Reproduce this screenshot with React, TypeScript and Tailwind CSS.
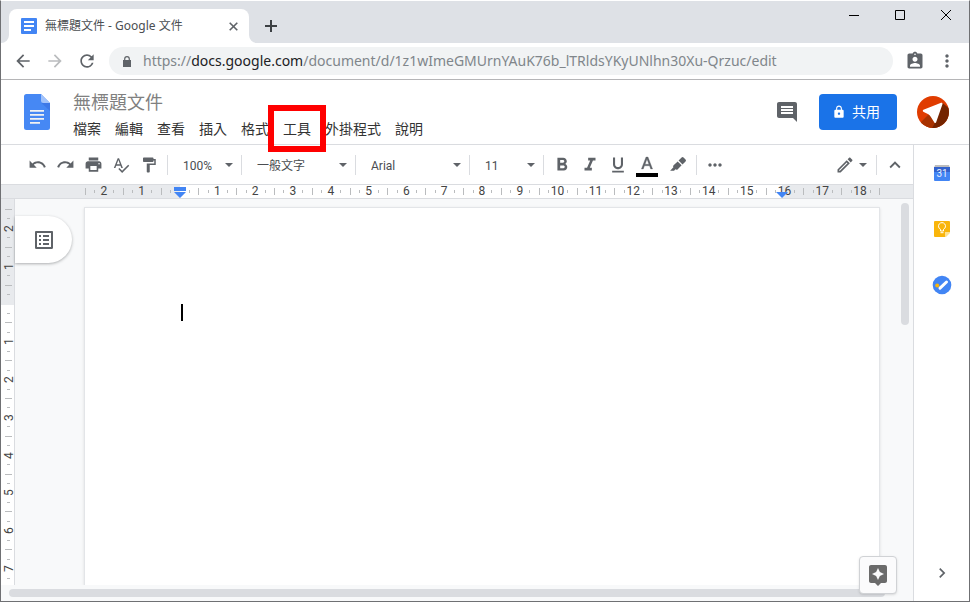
import React from "react";
import {
  MdArrowBack,
  MdArrowForward,
  MdAssignmentInd,
  MdAssistant,
  MdChevronRight,
  MdComment,
  MdExpandLess,
  MdFormatBold,
  MdFormatItalic,
  MdFormatPaint,
  MdFormatUnderlined,
  MdLock,
  MdMoreHoriz,
  MdMoreVert,
  MdOutlineEdit,
  MdOutlineListAlt,
  MdPrint,
  MdRedo,
  MdRefresh,
  MdSpellcheck,
  MdUndo,
} from "react-icons/md";

const MENUS = ["檔案", "編輯", "查看", "插入", "格式", "工具", "外掛程式", "說明"];
const HIGHLIGHTED_MENU = "工具";

// centimetres, counted from the page margin
const H_MARKS = Array.from({ length: 21 }, (_, i) => i - 2);
const V_MARKS = Array.from({ length: 10 }, (_, i) => i - 2);

function DocsFavicon() {
  return (
    <svg width="16" height="16" viewBox="0 0 16 16" aria-hidden="true">
      <rect width="16" height="16" rx="1" fill="#4285f4" />
      <path d="M3 3h10v2H3zM3 7h10v2H3zM3 11h7v2H3z" fill="#fff" />
    </svg>
  );
}

function DocsLogo() {
  return (
    <svg width="26" height="36" viewBox="0 0 26 36" aria-hidden="true">
      <path d="M2.500 0H17l9 9v24.500a2.500 2.500 0 0 1-2.500 2.500h-21A2.500 2.500 0 0 1 0 33.500v-31A2.500 2.500 0 0 1 2.500 0z" fill="#4688f4" />
      <path d="M17.500 9 26 17V9z" fill="#3367d6" opacity=".45" />
      <path d="M17 0l9 9h-6.500A2.500 2.500 0 0 1 17 6.500z" fill="#a1c2fa" />
      <path d="M6 16h14v1.800H6zM6 20h14v1.800H6zM6 24h14v1.800H6zM6 28h10v1.800H6z" fill="#f1f1f1" />
    </svg>
  );
}

function Avatar() {
  return (
    <svg width="32" height="32" viewBox="0 0 32 32" aria-hidden="true">
      <defs>
        <clipPath id="avatar-clip">
          <circle cx="16" cy="16" r="16" />
        </clipPath>
      </defs>
      <g clipPath="url(#avatar-clip)">
        <rect width="32" height="32" fill="#e03c00" />
        <path d="M12 18 0 30l4 4h14l1-9z" fill="#a83200" />
        <path d="M25.500 7 34 14v20H14l4.500-8z" fill="#742400" />
        <path d="M24.500 7.800 6.800 14.800l5 2.600c1.200.6 2 1.400 2.600 2.500l3.800 6z" fill="#fff" stroke="#fff" strokeWidth="2" strokeLinejoin="round" />
      </g>
    </svg>
  );
}

function HighlighterIcon() {
  return (
    <svg width="18" height="18" viewBox="0 0 16 16" fill="currentColor" aria-hidden="true">
      <path d="M11.200 1.300a1.200 1.200 0 0 1 1.700 0l1.800 1.800a1.200 1.200 0 0 1 0 1.700L12 7.500 8.500 4z" />
      <path d="M7.700 4.800l3.500 3.500-3.400 3.400c-.6.6-1.500.6-2.100.1L4.500 13H1l2.900-2.900c-.4-.6-.3-1.300.2-1.800z" />
    </svg>
  );
}

function CaretDown() {
  return (
    <svg width="8" height="4" viewBox="0 0 8 4" aria-hidden="true">
      <path d="M0 0h8L4 4z" fill="#5f6368" />
    </svg>
  );
}

/** Concave foot on each side of the active tab. */
function TabFoot({ flip = false }: { flip?: boolean }) {
  return (
    <svg width="8" height="8" viewBox="0 0 8 8" aria-hidden="true">
      <path d={flip ? "M0 0a8 8 0 0 0 8 8H0z" : "M8 0a8 8 0 0 1-8 8h8z"} fill="#fff" />
    </svg>
  );
}

function TabStrip() {
  return (
    <div className="flex h-[42px] shrink-0 items-end bg-[#dee1e6]">
      <TabFoot />
      <div className="flex h-[34px] w-60 items-center rounded-t-lg bg-white pr-[9px] pl-3">
        <DocsFavicon />
        <span className="ml-2 flex-1 font-['Noto_Sans','Noto_Sans_CJK_TC',sans-serif] text-xs whitespace-nowrap text-[#4b4e52]">
          無標題文件 - Google 文件
        </span>
        <button aria-label="關閉分頁" className="flex size-[14px] items-center justify-center">
          <svg width="9" height="9" viewBox="0 0 9 9" stroke="#5f6368" strokeWidth="1.6">
            <path d="M.7.7l7.600 7.600M8.300.7.7 8.300" />
          </svg>
        </button>
      </div>
      <TabFoot flip />
      <button aria-label="新分頁" className="flex h-[34px] w-7 items-center justify-center">
        <svg width="12" height="12" viewBox="0 0 12 12" fill="#3c4043">
          <path d="M5 0h2v5h5v2H7v5H5V7H0V5h5z" />
        </svg>
      </button>
      <div className="ml-auto flex self-start">
        <button aria-label="最小化" className="flex h-7 w-[46px] items-center justify-center">
          <svg width="10" height="10" viewBox="0 0 10 10">
            <path d="M0 5h10v1H0z" />
          </svg>
        </button>
        <button aria-label="最大化" className="flex h-7 w-[46px] items-center justify-center">
          <svg width="10" height="10" viewBox="0 0 10 10" fill="none" stroke="#000">
            <path d="M.5.5h9v9h-9z" />
          </svg>
        </button>
        <button aria-label="關閉" className="flex h-7 w-[46px] items-center justify-center">
          <svg width="10" height="10" viewBox="0 0 10 10" fill="none" stroke="#000">
            <path d="M0 0l10 10M10 0 0 10" />
          </svg>
        </button>
      </div>
    </div>
  );
}

function AddressBar() {
  return (
    <div className="flex h-[37px] shrink-0 items-center border-b border-[#b5b5b7] bg-white px-[6px] text-[#5f6368]">
      <button aria-label="上一頁" className="flex w-8 justify-center">
        <MdArrowBack size={20} />
      </button>
      <button aria-label="下一頁" className="flex w-8 justify-center text-[#babcbe]">
        <MdArrowForward size={20} />
      </button>
      <button aria-label="重新載入" className="flex w-8 justify-center">
        <MdRefresh size={20} />
      </button>
      <label className="mx-[6px] flex h-7 flex-1 items-center rounded-full bg-[#f1f3f4] pl-[14px] font-['Noto_Sans',sans-serif] text-sm text-[#80868b]">
        <svg width="8" height="11" viewBox="0 0 8 11" aria-hidden="true" className="mr-3">
          <path d="M0 4h8v7H0z" fill="#5f6368" />
          <path d="M1.700 4.500V3a2.300 2.300 0 0 1 4.600 0v1.500" fill="none" stroke="#5f6368" strokeWidth="1.200" />
        </svg>
        <span>https://</span>
        <span className="text-[#202124]">docs.google.com</span>
        <input
          type="text"
          aria-label="網址"
          defaultValue="/document/d/1z1wImeGMUrnYAuK76b_lTRldsYKyUNlhn30Xu-Qrzuc/edit"
          className="min-w-0 flex-1 bg-transparent outline-none"
        />
      </label>
      <button aria-label="使用者" className="flex w-8 justify-center">
        <MdAssignmentInd size={20} />
      </button>
      <button aria-label="更多" className="flex w-8 justify-center">
        <MdMoreVert size={20} />
      </button>
    </div>
  );
}

function DocsHeader() {
  return (
    <header className="flex h-[65px] shrink-0 items-center border-b border-[#dadce0] pr-5 pl-[23px]">
      <DocsLogo />
      <div className="ml-[23px] flex flex-col pt-2">
        <input
          aria-label="文件名稱"
          defaultValue="無標題文件"
          className="h-[26px] w-40 text-lg text-[#808080] outline-none"
        />
        <nav className="flex h-[26px] items-center gap-[14px] text-sm text-[#333]">
          {MENUS.map((menu) => (
            <button key={menu} className="relative whitespace-nowrap">
              {menu}
              {menu === HIGHLIGHTED_MENU && (
                <span className="absolute -inset-x-[15px] -top-[14px] z-10 h-[47px] border-6 border-[#ff0000]" />
              )}
            </button>
          ))}
        </nav>
      </div>
      <div className="ml-auto flex items-center gap-5">
        <button aria-label="註解" className="text-[#5f6368]">
          <MdComment size={24} />
        </button>
        <button className="flex h-9 items-center gap-[6px] rounded bg-[#1a73e8] pr-[17px] pl-[13px] text-sm text-white">
          <MdLock size={14} />
          共用
        </button>
        <button aria-label="帳戶">
          <Avatar />
        </button>
      </div>
    </header>
  );
}

function Divider() {
  return <div className="h-5 w-px shrink-0 bg-[#dadce0]" />;
}

function ToolButton({ label, children }: { label: string; children: React.ReactNode }) {
  return (
    <button aria-label={label} className="flex h-7 w-7 shrink-0 items-center justify-center">
      {children}
    </button>
  );
}

function ToolSelect({ label, value, wide = false }: { label: string; value: string; wide?: boolean }) {
  return (
    <div className={wide ? "relative w-[113px]" : "relative w-[73px]"}>
      <select
        aria-label={label}
        className="w-full appearance-none pl-[15px] text-xs text-[#4a4d51] outline-none"
      >
        <option>{value}</option>
      </select>
      <span className="pointer-events-none absolute inset-y-0 right-2 flex items-center">
        <CaretDown />
      </span>
    </div>
  );
}

function Toolbar() {
  return (
    <div className="flex h-10 shrink-0 items-center border-b border-[#dadce0] pr-1 pl-[22px] font-[Roboto,'Noto_Sans_CJK_TC',sans-serif] text-[#5f6368]">
      <ToolButton label="復原"><MdUndo size={19} /></ToolButton>
      <ToolButton label="取消復原"><MdRedo size={19} /></ToolButton>
      <ToolButton label="列印"><MdPrint size={19} /></ToolButton>
      <ToolButton label="拼字檢查"><MdSpellcheck size={18} /></ToolButton>
      <ToolButton label="複製格式"><MdFormatPaint size={18} /></ToolButton>
      <div className="w-1" />
      <Divider />
      <ToolSelect label="縮放" value="100%" />
      <Divider />
      <ToolSelect label="樣式" value="一般文字" wide />
      <Divider />
      <ToolSelect label="字型" value="Arial" wide />
      <Divider />
      <ToolSelect label="字型大小" value="11" />
      <Divider />
      <div className="flex px-1">
        <ToolButton label="粗體"><MdFormatBold size={22} /></ToolButton>
        <ToolButton label="斜體"><MdFormatItalic size={22} /></ToolButton>
        <ToolButton label="底線"><MdFormatUnderlined size={20} /></ToolButton>
        <div className="w-px" />
        <ToolButton label="文字顏色">
          <svg width="22" height="24" viewBox="0 0 22 24" aria-hidden="true">
            <path d="M10 4h2l4.600 12h-1.900l-1.200-3.200H8.500L7.300 16H5.400zM9.100 11.200h3.800L11 6.200z" fill="#5f6368" stroke="#5f6368" strokeWidth=".3" />
            <path d="M0 20h22v4H0z" fill="#000" />
          </svg>
        </ToolButton>
        <div className="w-[3px]" />
        <ToolButton label="醒目顯示"><HighlighterIcon /></ToolButton>
      </div>
      <Divider />
      <div className="px-1">
        <ToolButton label="更多"><MdMoreHoriz size={20} /></ToolButton>
      </div>
      <button aria-label="編輯模式" className="ml-auto flex items-center gap-1 pr-[9px]">
        <MdOutlineEdit size={20} />
        <CaretDown />
      </button>
      <Divider />
      <div className="pl-1">
        <ToolButton label="隱藏選單"><MdExpandLess size={22} /></ToolButton>
      </div>
    </div>
  );
}

function HorizontalRuler() {
  return (
    <div className="flex h-[14px] shrink-0 border-b border-[#dadce0] bg-[#e8eaed] pl-[84px] font-[Roboto,sans-serif] text-xs leading-[13px] text-[#444]">
      <div className="relative w-[794px]">
        <div className="absolute inset-y-0 left-[95px] w-[602px] bg-white" />
        <div className="relative grid h-full grid-cols-[repeat(21,minmax(0,1fr))]">
          {H_MARKS.map((n) => (
            <div key={n} className="grid grid-cols-4 items-center">
              <span className="h-[7px] w-px bg-[#babcbe]" />
              <span className="h-[3px] w-px bg-[#babcbe]" />
              <span className="flex w-0 justify-center">{n === 0 ? "" : Math.abs(n)}</span>
              <span className="h-[3px] w-px bg-[#babcbe]" />
            </div>
          ))}
        </div>
        <svg width="12" height="11" viewBox="0 0 12 11" className="absolute top-[2px] left-[89px]">
          <path d="M0 0h12v4H0zM0 5h12L6 11z" fill="#4285f4" />
        </svg>
        <svg width="12" height="6" viewBox="0 0 12 6" className="absolute top-[7px] left-[691px]">
          <path d="M0 0h12L6 6z" fill="#4285f4" />
        </svg>
        <span className="absolute top-[3px] left-full h-[7px] w-px bg-[#babcbe]" />
      </div>
    </div>
  );
}

function VerticalRuler() {
  return (
    <div className="w-[14px] shrink-0 overflow-hidden border-r border-[#dadce0] bg-white font-[Roboto,sans-serif] text-xs leading-[13px] text-[#444]">
      <div className="bg-linear-to-b from-[#e8eaed] from-[106px] to-white to-[106px] pt-[10px]">
        <div className="grid h-[378px] grid-rows-[repeat(10,minmax(0,1fr))]">
          {V_MARKS.map((n) => (
            <div key={n} className="grid grid-rows-4 justify-items-center">
              <span className="h-px w-[7px] bg-[#babcbe]" />
              <span className="h-px w-[3px] bg-[#babcbe]" />
              <span className="flex h-px rotate-180 items-center justify-center pr-[2px] [writing-mode:vertical-rl]">
                {n === 0 ? "" : Math.abs(n)}
              </span>
              <span className="h-px w-[3px] bg-[#babcbe]" />
            </div>
          ))}
        </div>
      </div>
    </div>
  );
}

function Editor() {
  return (
    <div className="relative flex min-h-0 flex-1 flex-col bg-[#f8f9fa]">
      <div className="flex min-h-0 flex-1 overflow-hidden">
        <VerticalRuler />
        <button
          aria-label="顯示文件大綱"
          className="mt-[17px] flex h-[47px] w-[57px] shrink-0 items-center justify-center rounded-r-full bg-white text-[#5f6368] shadow-[0_1px_3px_rgba(60,64,67,0.4)]"
        >
          <MdOutlineListAlt size={24} />
        </button>
        <div className="mt-[8px] ml-3 w-[796px] shrink-0 border border-b-0 border-[#e3e5e8] bg-white p-24 shadow-sm">
          <div className="h-[17px] w-[2px] bg-black" />
        </div>
        <div className="mt-1 mr-1 ml-auto h-[122px] w-2 shrink-0 rounded-full bg-[#dadce0]" />
      </div>
      <div className="h-4 shrink-0 pt-1 pr-7 pl-2">
        <div className="h-2 rounded-full bg-[#dadce0]" />
      </div>
      <button
        aria-label="探索"
        className="absolute right-4 bottom-[7px] flex h-[38px] w-[38px] items-center justify-center rounded-sm border border-[#d0d2d5] bg-[#fbfbfc] text-[#6b6b6b] shadow-sm"
      >
        <MdAssistant size={24} />
      </button>
    </div>
  );
}

function SidePanel() {
  return (
    <aside className="flex w-14 shrink-0 flex-col items-center border-l border-[#dadce0] bg-white pt-[18px]">
      <div className="flex flex-col gap-9">
        <button aria-label="日曆">
          <svg width="20" height="20" viewBox="0 0 20 20" aria-hidden="true">
            <path d="M3 2h14l1 3H2z" fill="#bdbdbd" />
            <path d="M2 4h16v6H2z" fill="#3362cc" />
            <path d="M2 9h16v8a1 1 0 0 1-1 1H3a1 1 0 0 1-1-1z" fill="#4285f4" />
            <text x="10" y="14" textAnchor="middle" fontSize="10" fill="#eaf1fe" fontFamily="Roboto">31</text>
          </svg>
        </button>
        <button aria-label="Keep">
          <svg width="20" height="20" viewBox="0 0 20 20" aria-hidden="true">
            <path d="M3 2h14a1 1 0 0 1 1 1v10l-5 5H3a1 1 0 0 1-1-1V3a1 1 0 0 1 1-1z" fill="#f9b50b" />
            <path d="M18 13v1l-4 4h-1v-5z" fill="#fde293" />
            <g fill="none" stroke="#fff" strokeWidth="1">
              <path d="M8.500 12v-1.700a3.500 3.500 0 1 1 3 0V12z" />
              <path d="M8.500 13.700h3" />
            </g>
          </svg>
        </button>
        <button aria-label="Tasks">
          <svg width="20" height="20" viewBox="0 0 20 20" aria-hidden="true">
            <circle cx="10" cy="10" r="9.300" fill="#4285f4" />
            <path d="M8 13.200 14.500 7" stroke="#fff" strokeWidth="3" strokeLinecap="round" />
            <circle cx="5.200" cy="10.400" r="2" fill="#f9b50b" />
          </svg>
        </button>
      </div>
      <button aria-label="隱藏側邊面板" className="mt-auto mb-[18px] text-[#5f6368]">
        <MdChevronRight size={20} />
      </button>
    </aside>
  );
}

export default function App() {
  return (
    <div className="flex h-screen flex-col overflow-hidden border border-[#6f7073] border-t-white bg-white font-[Roboto,'Noto_Sans_CJK_TC',sans-serif]">
      <TabStrip />
      <AddressBar />
      <DocsHeader />
      <div className="flex min-h-0 flex-1">
        <main className="flex min-w-0 flex-1 flex-col">
          <Toolbar />
          <HorizontalRuler />
          <Editor />
        </main>
        <SidePanel />
      </div>
    </div>
  );
}
